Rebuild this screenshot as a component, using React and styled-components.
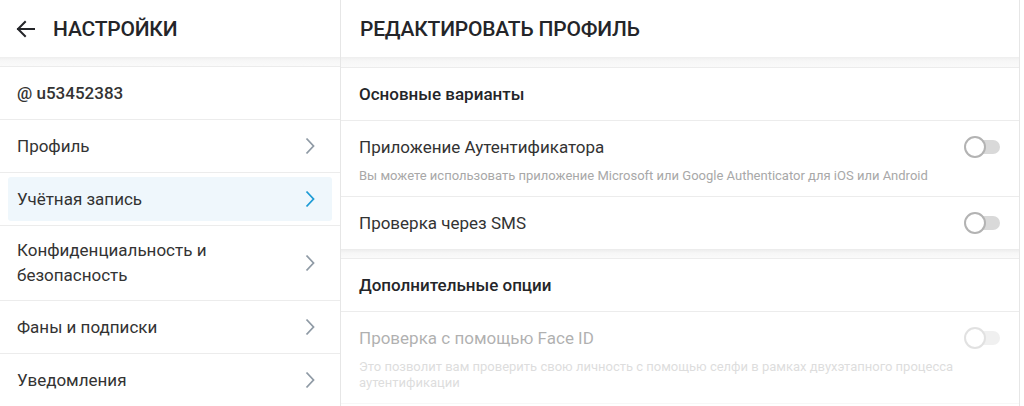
import styled, { createGlobalStyle } from "styled-components";

const GlobalStyle = createGlobalStyle`
  html, body {
    margin: 0;
    padding: 0;
    background: #fff;
  }
  body {
    font-family: Roboto, "Liberation Sans", Arial, sans-serif;
    color: #333;
  }
  * {
    box-sizing: border-box;
  }
`;

const Page = styled.div`
  display: flex;
  width: 1024px;
  height: 406px;
  overflow: hidden;
`;

const Column = styled.div`
  width: ${(p) => p.width}px;
  flex-shrink: 0;
  border-right: 1px solid #e6e6e6;
  display: flex;
  flex-direction: column;
  & > * {
    flex-shrink: 0;
  }
`;

const Header = styled.div`
  height: 57px;
  display: flex;
  align-items: center;
  gap: 17px;
  padding: 0 ${(p) => (p.wide ? 19 : 16)}px;
`;

const Title = styled.h1`
  margin: 0;
  font-size: 21px;
  font-weight: 500;
  color: #242529;
  text-transform: uppercase;
  letter-spacing: -0.2px;
`;

const Band = styled.div`
  height: ${(p) => p.h}px;
  background: linear-gradient(#eeeeee, #f7f7f7 40%, #fafafa);
  border-bottom: 1px solid #ececec;
`;

const List = styled.ul`
  list-style: none;
  margin: 0;
  padding: 0;
`;

const Row = styled.li`
  padding: 4px 8px;
  border-bottom: 1px solid #ececec;
`;

const Link = styled.a`
  display: flex;
  align-items: center;
  justify-content: space-between;
  min-height: 44px;
  padding: ${(p) => (p.multi ? 8 : 10)}px 9px;
  border-radius: 3px;
  font-size: 17px;
  line-height: ${(p) => (p.multi ? 25 : 24)}px;
  color: #333;
  text-decoration: none;
  font-weight: ${(p) => (p.bold ? 500 : 400)};
  background: ${(p) => (p.active ? "#eff7fc" : "transparent")};
  svg {
    color: ${(p) => (p.active ? "#1d9bd5" : "#8f9aa5")};
    margin-right: 8px;
    flex-shrink: 0;
  }
`;

const Section = styled.div`
  padding: 14px 18px;
  font-size: 17px;
  line-height: 24px;
  font-weight: 500;
  color: #242529;
  border-bottom: 1px solid #ececec;
`;

const Option = styled.div`
  display: flex;
  align-items: flex-start;
  justify-content: space-between;
  padding: 14px 19px ${(p) => (p.sub ? 12 : 14)}px 18px;
  border-bottom: 1px solid #ececec;
  opacity: ${(p) => (p.disabled ? 0.38 : 1)};
`;

const OptionText = styled.div`
  flex: 1;
  padding-right: 4px;
`;

const OptionTitle = styled.div`
  font-size: 17px;
  line-height: 24px;
  color: #333;
`;

const OptionSub = styled.div`
  margin-top: 9px;
  font-size: 13px;
  line-height: 16px;
  color: #a8a8a8;
`;

const Toggle = styled.span`
  position: relative;
  width: 36px;
  height: 22px;
  margin-top: 1px;
  flex-shrink: 0;
  &::before {
    content: "";
    position: absolute;
    left: 4px;
    right: 0;
    top: 4px;
    height: 14px;
    border-radius: 7px;
    background: #d9d9d9;
  }
  &::after {
    content: "";
    position: absolute;
    left: 0;
    top: 0;
    width: 22px;
    height: 22px;
    border-radius: 50%;
    background: #fff;
    border: 2px solid #b3b3b3;
    box-sizing: border-box;
  }
`;

const BackArrow = () => (
  <svg width="20" height="18" viewBox="0 0 20 18" fill="none" stroke="#242529" strokeWidth="2" strokeLinecap="square">
    <path d="M2 9h16M9 2L2 9l7 7" />
  </svg>
);

const Chevron = () => (
  <svg width="10" height="18" viewBox="0 0 10 18" fill="none" stroke="currentColor" strokeWidth="1.8">
    <path d="M1.5 1.5L8.5 9l-7 7.5" />
  </svg>
);

const menu = [
  { label: "Профиль" },
  { label: "Учётная запись", active: true },
  { label: ["Конфиденциальность и", "безопасность"] },
  { label: "Фаны и подписки" },
  { label: "Уведомления" },
];

function App() {
  return (
    <>
      <GlobalStyle />
      <Page>
        <Column width={341}>
          <Header>
            <BackArrow />
            <Title>Настройки</Title>
          </Header>
          <Band h={10} />
          <List>
            <Row>
              <Link bold>@ u53452383</Link>
            </Row>
            {menu.map((item, i) => {
              const multi = Array.isArray(item.label);
              return (
                <Row key={i}>
                  <Link active={item.active} multi={multi}>
                    <span>
                      {multi ? (
                        <>
                          {item.label[0]}
                          <br />
                          {item.label[1]}
                        </>
                      ) : (
                        item.label
                      )}
                    </span>
                    <Chevron />
                  </Link>
                </Row>
              );
            })}
          </List>
        </Column>
        <Column width={679}>
          <Header wide>
            <Title>Редактировать профиль</Title>
          </Header>
          <Band h={11} />
          <Section>Основные варианты</Section>
          <Option sub>
            <OptionText>
              <OptionTitle>Приложение Аутентификатора</OptionTitle>
              <OptionSub>
                Вы можете использовать приложение Microsoft или Google Authenticator для iOS или Android
              </OptionSub>
            </OptionText>
            <Toggle />
          </Option>
          <Option>
            <OptionText>
              <OptionTitle>Проверка через SMS</OptionTitle>
            </OptionText>
            <Toggle />
          </Option>
          <Band h={9} />
          <Section>Дополнительные опции</Section>
          <Option sub disabled>
            <OptionText>
              <OptionTitle>Проверка с помощью Face ID</OptionTitle>
              <OptionSub>
                Это позволит вам проверить свою личность с помощью селфи в рамках двухэтапного процесса
                аутентификации
              </OptionSub>
            </OptionText>
            <Toggle />
          </Option>
        </Column>
      </Page>
    </>
  );
}

export default App;
